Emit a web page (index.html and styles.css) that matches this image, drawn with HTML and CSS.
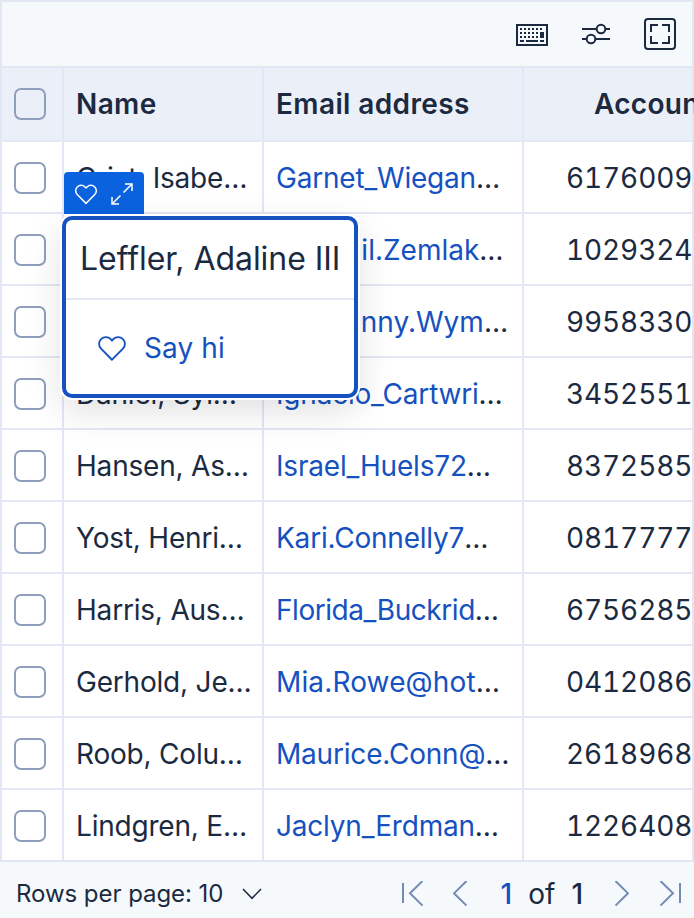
FILE: index.html
```
<!DOCTYPE html>
<html lang="en">
<head>
<meta charset="utf-8">
<title>Accounts</title>
<link rel="stylesheet" href="styles.css">
</head>
<body>
<main class="grid">
  <div class="toolbar">
    <svg class="icon" viewBox="0 0 32 32" fill="none" stroke="currentColor" stroke-width="2"><path d="M1 7h30v20H1z"/><path d="M4 11h24" stroke-dasharray="2 2"/><path d="M4 15h20M4 19h20" stroke-dasharray="2 2"/><path d="M4 23h4M10 23h12M24 23h4"/><path d="M24 17h4" stroke-width="6"/></svg>
    <svg class="icon" viewBox="0 0 32 32" fill="none" stroke="currentColor" stroke-width="2"><path d="M2 11h14.500M25.500 11H30M2 21h4.500M15.500 21H30"/><circle cx="21" cy="11" r="4.300"/><circle cx="11" cy="21" r="4.300"/></svg>
    <svg class="icon" viewBox="0 0 32 32" fill="none" stroke="currentColor" stroke-width="2"><rect x="1" y="1" width="30" height="30" rx="3"/><path d="M7 14V7h7M18 7h7v7M25 18v7h-7M14 25H7v-7"/></svg>
  </div>
  <div class="row head"><div class="check"><i class="box"></i></div><div class="name">Name</div><div class="email">Email address</div><div class="account">Account</div></div>
  <div class="row"><div class="check"><i class="box"></i></div><div class="name">Crist, Isabe…</div><div class="email"><a class="snug">Garnet_Wiegan</a>…</div><div class="account">61760093</div></div>
  <div class="row"><div class="check"><i class="box"></i></div><div class="name"><div class="anchor">
    <div class="quick"><svg class="heart" viewBox="0 0 32 32"><path d="M16 28.500 4.300 16.700a7.200 7.200 0 0 1 0-10.100c2.900-2.900 7.500-2.900 10.400 0L16 8l1.300-1.400c2.900-2.900 7.500-2.900 10.400 0a7.200 7.200 0 0 1 0 10.100z"/></svg><svg class="expand" viewBox="0 0 22 22"><path d="M14 1h7v7M21 1l-8.500 8.500M8 21H1v-7M1 21l8.500-8.500"/></svg></div>
    <div class="popup"><div class="value">Leffler, Adaline III</div><div class="action"><svg class="heart" viewBox="0 0 32 32"><path d="M16 28.500 4.300 16.700a7.200 7.200 0 0 1 0-10.100c2.900-2.900 7.500-2.900 10.400 0L16 8l1.300-1.400c2.900-2.900 7.500-2.900 10.400 0a7.200 7.200 0 0 1 0 10.100z"/></svg><span>Say hi</span></div></div>
  </div></div><div class="email"><a>Abagail.Zemlak</a>…</div><div class="account">10293247</div></div>
  <div class="row"><div class="check"><i class="box"></i></div><div class="name"></div><div class="email"><a>Geovanny.Wym</a>…</div><div class="account">99583306</div></div>
  <div class="row"><div class="check"><i class="box"></i></div><div class="name">Daniel, Syl…</div><div class="email"><a class="snug">Ignacio_Cartwri</a>…</div><div class="account">34525518</div></div>
  <div class="row"><div class="check"><i class="box"></i></div><div class="name">Hansen, As…</div><div class="email"><a class="snug">Israel_Huels72</a>…</div><div class="account">83725852</div></div>
  <div class="row"><div class="check"><i class="box"></i></div><div class="name">Yost, Henri…</div><div class="email"><a class="snug">Kari.Connelly7</a>…</div><div class="account">08177774</div></div>
  <div class="row"><div class="check"><i class="box"></i></div><div class="name">Harris, Aus…</div><div class="email"><a class="tight">Florida_Buckrid</a>…</div><div class="account">67562850</div></div>
  <div class="row"><div class="check"><i class="box"></i></div><div class="name">Gerhold, Je…</div><div class="email"><a class="loose">Mia.Rowe@hot</a>…</div><div class="account">04120869</div></div>
  <div class="row"><div class="check"><i class="box"></i></div><div class="name">Roob, Colu…</div><div class="email"><a class="snug">Maurice.Conn@</a>…</div><div class="account">26189681</div></div>
  <div class="row"><div class="check"><i class="box"></i></div><div class="name">Lindgren, E…</div><div class="email"><a class="snug">Jaclyn_Erdman</a>…</div><div class="account">12264087</div></div>
  <footer class="footer">
    <span class="size">Rows per page: 10</span>
    <svg class="caret" viewBox="0 0 20 12"><path d="M1 1l9 9.300L19 1"/></svg>
    <nav class="pager">
      <svg class="edge" viewBox="0 0 22 26"><path d="M1 2v20M20.500 0 8 12.300l12.500 12.300"/></svg>
      <svg class="step prev" viewBox="0 0 14 26"><path d="M13.500 0 1 12.300l12.500 12.300"/></svg>
      <span class="current">1</span><span class="of">of</span><span class="total">1</span>
      <svg class="step next" viewBox="0 0 14 26"><path d="M.5 0 13 12.300.5 24.600"/></svg>
      <svg class="edge last" viewBox="0 0 22 26"><path d="M.5 0 13 12.300.5 24.600M20 2v20"/></svg>
    </nav>
  </footer>
</main>
</body>
</html>
```
FILE: styles.css
```
* { box-sizing: border-box; }
body { margin: 0; background: #f5f9fc; color: #1c2a41; font: 28px/36px Inter, sans-serif; overflow: hidden; }
.grid { width: 694px; height: 918px; overflow: hidden; }
.toolbar { height: 68px; border: 2px solid #e2e7f3; display: flex; justify-content: flex-end; align-items: center; gap: 32px; padding-right: 16px; }
.icon { width: 32px; height: 32px; }
.row { display: grid; grid-template-columns: 62px 200px 260px 168px; height: 72px; border: solid #e2e7f3; border-width: 0 2px 2px; background: #fff; }
.row > div { border-right: 2px solid #e2e7f3; padding: 2px 12px 0; white-space: nowrap; display: flex; align-items: center; min-width: 0; }
.row > .name { letter-spacing: -.2px; }
.row > .account { border-right: 0; padding-left: 42px; overflow: hidden; font-feature-settings: "tnum"; letter-spacing: -.12px; }
.row.head { height: 74px; background: #ebeff8; font-weight: 600; letter-spacing: .38px; }
.row.head > div { padding-top: 0; }
.row.head > .name { letter-spacing: .38px; }
.row.head > .account { padding-left: 70px; letter-spacing: .3px; overflow: visible; }
.box { width: 32px; height: 32px; border: 2px solid #8e9fbe; border-radius: 7px; }
.row a { color: #1551bf; }
.snug { letter-spacing: -.2px; }
.tight { letter-spacing: -.45px; }
.loose { letter-spacing: .14px; }
.anchor { position: relative; height: 36px; }
.heart { fill: none; stroke: currentColor; stroke-width: 2; }
.quick { position: absolute; left: -12px; top: -60px; z-index: 1; width: 80px; height: 42px; background: #0b62df; color: #fff; border-radius: 4px 4px 0 0; display: flex; align-items: center; gap: 13px; padding: 2px 0 0 10px; }
.quick .heart { width: 24px; height: 24px; }
.expand { width: 22px; height: 22px; fill: none; stroke: currentColor; stroke-width: 1.5; }
.popup { position: absolute; left: -14px; top: -16px; z-index: 2; width: 296px; height: 182px; background: #fff; border: 4px solid #1551bf; border-radius: 10px; box-shadow: 0 0 0 2px #fff, 0 12px 36px rgba(0,0,0,.13); }
.value { height: 80px; border-bottom: 2px solid #e2e7f3; padding: 0 14px; font-size: 32px; line-height: 78px; letter-spacing: -.05px; }
.action { height: 96px; padding-left: 31px; display: flex; align-items: center; gap: 17px; color: #1551bf; letter-spacing: .1px; }
.action .heart { width: 30px; height: 30px; }
.footer { height: 56px; display: flex; align-items: center; padding: 8px 12px 0 16px; }
.size { font-size: 24px; letter-spacing: -.05px; }
.caret { width: 20px; height: 12px; margin-left: 19px; fill: none; stroke: #1c2a41; stroke-width: 1.5; }
.pager { margin-left: auto; display: flex; align-items: center; }
.edge { width: 22px; height: 26px; }
.step { width: 14px; height: 26px; }
.pager svg { fill: none; stroke: #738cb5; stroke-width: 2; }
.prev { margin-left: 29px; }
.current { margin-left: 34px; font-weight: 500; color: #1551bf; }
.of { margin-left: 16px; }
.total { margin-left: 16px; font-weight: 500; }
.next { margin-left: 32px; }
.last { margin-left: 31px; }
```
